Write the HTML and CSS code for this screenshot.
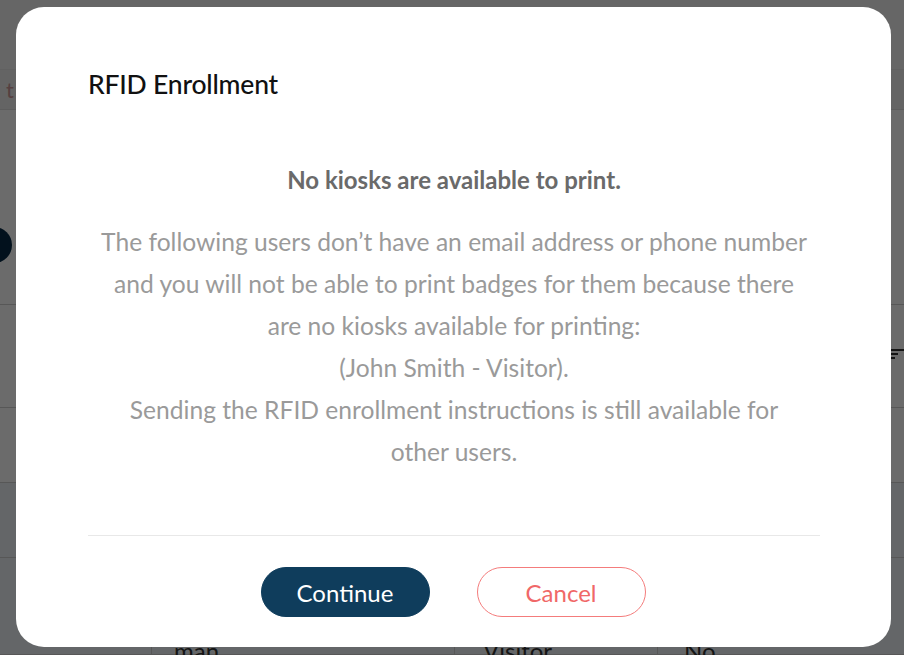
FILE: index.html
```html
<!DOCTYPE html>
<html lang="en">
<head>
<meta charset="utf-8">
<title>RFID Enrollment</title>
<link rel="stylesheet" href="styles.css">
</head>
<body>
<div class="page">
  <div class="topbar"></div>
  <div class="toolbar"><span class="search">t</span></div>
  <div class="row tall"><span class="avatar"></span></div>
  <div class="row head"><span class="filter"><i></i><i></i><i></i></span></div>
  <div class="row"></div>
  <div class="row alt"></div>
  <div class="row alt last">
    <span class="cell c1">man</span>
    <span class="cell c2">Visitor</span>
    <span class="cell c3">No</span>
  </div>
</div>

<div class="overlay">
  <div class="modal" role="dialog" aria-labelledby="modal-title">
    <h2 class="modal-title" id="modal-title">RFID Enrollment</h2>
    <p class="modal-lead">No kiosks are available to print.</p>
    <p class="modal-text">The following users don’t have an email address or phone number<br>
      and you will not be able to print badges for them because there<br>
      are no kiosks available for printing:<br>
      (John Smith - Visitor).<br>
      Sending the RFID enrollment instructions is still available for<br>
      other users.</p>
    <hr class="divider">
    <div class="actions">
      <button class="btn btn-primary" type="button">Continue</button>
      <button class="btn btn-outline" type="button">Cancel</button>
    </div>
  </div>
</div>
</body>
</html>
```
FILE: styles.css
```css
* { box-sizing: border-box; }

html, body {
  margin: 0;
  padding: 0;
  width: 904px;
  height: 655px;
  overflow: hidden;
  font-family: Lato, "Open Sans", "Liberation Sans", sans-serif;
}

body { background: #ffffff; }

/* ---------- background page ---------- */
.page {
  height: 655px;
  display: flex;
  flex-direction: column;
  background: #ffffff;
}

.topbar {
  height: 70px;
  background: #f4f4f4;
  border-bottom: 1px solid #e6e6e6;
}

.toolbar {
  height: 40px;
  background: #eeeeee;
  border-bottom: 1px solid #dddddd;
  padding-left: 6px;
  display: flex;
  align-items: center;
  color: #c99;
  font-size: 22px;
}

.row {
  height: 75px;
  border-bottom: 1px solid #cfcfcf;
  position: relative;
  display: flex;
  align-items: center;
}

.row.tall { height: 195px; }
.row.head { height: 103px; }
.row.alt { background: #eef4f7; }
.row.last { flex: 1; align-items: flex-start; padding-top: 78px; }

.avatar {
  position: absolute;
  left: -24px;
  top: 117px;
  width: 36px;
  height: 36px;
  border-radius: 50%;
  background: #062a45;
}

.filter {
  position: absolute;
  right: 0;
  top: 44px;
  display: flex;
  flex-direction: column;
  align-items: flex-start;
  gap: 2px;
}
.filter i {
  display: block;
  height: 2px;
  background: #333;
}
.filter i:nth-child(1) { width: 16px; }
.filter i:nth-child(2) { width: 10px; }
.filter i:nth-child(3) { width: 5px; margin-left: 2px; }

.cell {
  font-size: 24px;
  line-height: 30px;
  color: #333;
  height: 100%;
  border-left: 1px solid #cfcfcf;
  padding-left: 22px;
}
.c1 { margin-left: 151px; width: 303px; }
.c2 { width: 203px; padding-left: 28px; }
.c3 { flex: 1; padding-left: 26px; }

/* ---------- overlay + modal ---------- */
.overlay {
  position: fixed;
  inset: 0;
  background: rgba(0, 0, 0, 0.58);
  padding: 7px 13px 8px 16px;
  display: flex;
  justify-content: flex-start;
  align-items: flex-start;
}

.modal {
  width: 875px;
  height: 640px;
  background: #ffffff;
  border-radius: 28px;
  padding: 62px 71px 30px 72px;
  display: flex;
  flex-direction: column;
}

.modal-title {
  margin: 0;
  font-size: 26.5px;
  line-height: 30px;
  font-weight: 500;
  color: #111111;
  letter-spacing: -0.2px;
}

.modal-lead {
  margin: 60px 0 0;
  text-align: center;
  font-size: 24px;
  line-height: 42px;
  font-weight: 700;
  color: #6a6a6a;
}

.modal-text {
  margin: 20px 0 0;
  text-align: center;
  font-size: 24.6px;
  line-height: 42px;
  color: #9a9a9a;
}

.divider {
  margin: 62px 0 0;
  border: 0;
  border-top: 1px solid #e8e8e8;
  height: 0;
}

.actions {
  margin-top: 31px;
  display: flex;
  justify-content: center;
  gap: 47px;
  padding-right: 2px;
}

.btn {
  width: 169px;
  height: 50px;
  border-radius: 25px;
  font-family: inherit;
  font-size: 24px;
  cursor: pointer;
  padding: 0;
}

.btn-primary {
  background: #0f3d5c;
  border: 1px solid #0f3d5c;
  color: #ffffff;
}

.btn-outline {
  background: #ffffff;
  border: 1.5px solid #f47c7c;
  color: #f06868;
}
```
